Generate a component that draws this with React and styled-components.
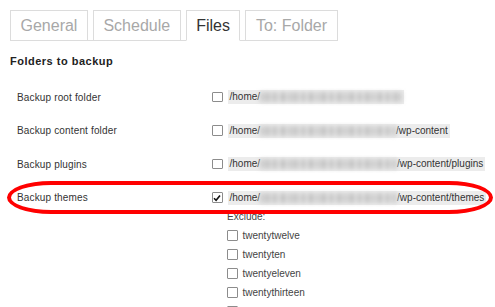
import styled, { createGlobalStyle } from "styled-components";

const GlobalStyle = createGlobalStyle`
  html, body {
    margin: 0;
    background: #fff;
    overflow: hidden;
  }
  body {
    font-family: "Liberation Sans", Arial, sans-serif;
    color: #333;
  }
`;

const tabs = ["General", "Schedule", "Files", "To: Folder"];

const folders = [
  { label: "Backup root folder", blur: 142, suffix: "" },
  { label: "Backup content folder", blur: 136, suffix: "/wp-content" },
  { label: "Backup plugins", blur: 137, suffix: "/wp-content/plugins" },
  { label: "Backup themes", blur: 137, suffix: "/wp-content/themes", checked: true, marked: true },
];

const themes = ["twentytwelve", "twentyten", "twentyeleven", "twentythirteen", "twentyfourteen"];

const Check = ({ checked }) => (
  <Box>
    {checked && (
      <svg width="8" height="8" viewBox="0 0 8 8">
        <path d="M1 4.2 L3.1 6.3 L7 1.4" fill="none" stroke="#111" strokeWidth="1.6" />
      </svg>
    )}
  </Box>
);

const App = () => {
  return (
    <Page>
      <GlobalStyle />
      <TabBar>
        {tabs.map((t) => (
          <Tab key={t} active={t === "Files"}>
            {t}
          </Tab>
        ))}
      </TabBar>

      <Heading>Folders to backup</Heading>

      {folders.map((f) => (
        <Row key={f.label}>
          <Label>{f.label}</Label>
          <Field>
            <Line>
              <Check checked={f.checked} />
              <Path>
                /home/
                <Blurred style={{ width: f.blur }} />
                {f.suffix}
              </Path>
            </Line>
            {f.marked && (
              <>
                <Line indent>Exclude:</Line>
                {themes.map((t) => (
                  <Line key={t} indent>
                    <Check />
                    <ThemeName>{t}</ThemeName>
                  </Line>
                ))}
              </>
            )}
          </Field>
          {f.marked && <Highlight />}
        </Row>
      ))}
    </Page>
  );
};

const Page = styled.div`
  padding: 10px 10px 0;
`;

const TabBar = styled.div`
  display: flex;
  gap: 5px;
  width: fit-content;
  border-bottom: 1px solid #dcdcdc;
  height: 31px;
  box-sizing: border-box;
  align-items: flex-end;
`;

const Tab = styled.div`
  height: 31px;
  box-sizing: border-box;
  padding: 0 9.5px;
  border: 1px solid #dcdcdc;
  border-bottom-color: ${(p) => (p.active ? "#fff" : "#dcdcdc")};
  margin-bottom: -1px;
  background: #fff;
  font-size: 16px;
  line-height: 29px;
  color: ${(p) => (p.active ? "#333" : "#a8a8a8")};
`;

const Heading = styled.h3`
  margin: 10.5px 0 10px;
  font-size: 11px;
  line-height: 19px;
  font-weight: bold;
  letter-spacing: 0.5px;
  color: #222;
`;

const Row = styled.div`
  position: relative;
  display: flex;
  align-items: flex-start;
  padding: 7px 0 7.5px;
`;

const Label = styled.div`
  flex-shrink: 0;
  width: 195px;
  padding-left: 7px;
  font-size: 10px;
  line-height: 19px;
  letter-spacing: 0.15px;
  color: #333;
`;

const Field = styled.div`
  display: flex;
  flex-direction: column;
  min-width: 0;
`;

const Line = styled.div`
  display: flex;
  align-items: center;
  gap: 5px;
  height: 19px;
  padding-left: ${(p) => (p.indent ? "15px" : "0")};
  font-size: 10px;
  color: #444;
  white-space: nowrap;
`;

const Box = styled.span`
  flex-shrink: 0;
  display: inline-flex;
  align-items: center;
  justify-content: center;
  width: 10.5px;
  height: 10.5px;
  box-sizing: border-box;
  border: 1px solid #8c8c8c;
  border-radius: 1px;
  background: #fff;
`;

const Path = styled.code`
  display: inline-flex;
  align-items: center;
  background: #ececec;
  padding: 1px 2px;
  font-family: "Liberation Sans", Arial, sans-serif;
  font-size: 10px;
  line-height: 12px;
  color: #333;
  white-space: nowrap;
`;

const Blurred = styled.span`
  display: inline-block;
  flex-shrink: 0;
  height: 10px;
  background:
    repeating-linear-gradient(
      90deg,
      transparent 0 4px,
      rgba(150, 150, 150, 0.35) 4px 6px,
      transparent 6px 13px,
      rgba(140, 140, 140, 0.3) 13px 15px,
      transparent 15px 19px
    ),
    repeating-linear-gradient(
      90deg,
      #c8c8c8 0 3px,
      #e0e0e0 3px 7px,
      #bcbcbc 7px 9px,
      #d6d6d6 9px 12px,
      #e4e4e4 12px 14px
    );
  filter: blur(2px);
`;

const ThemeName = styled.span`
  font-size: 10px;
  color: #444;
`;

const Highlight = styled.div`
  position: absolute;
  top: 0;
  left: -3px;
  right: -8px;
  height: 33px;
  box-sizing: border-box;
  border: 4px solid #f00;
  border-radius: 44px / 16.5px;
  pointer-events: none;
`;

export default App;
